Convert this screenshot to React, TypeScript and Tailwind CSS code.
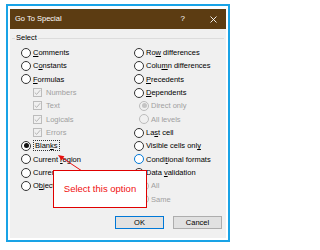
import React from "react";

type Item = {
  label: React.ReactNode;
  kind: "radio" | "check" | "sub";
  disabled?: boolean;
  checked?: boolean;
  focus?: boolean;
  hot?: boolean;
};

const u = (s: string) => <span className="underline underline-offset-1">{s}</span>;

const leftItems: Item[] = [
  { label: <>{u("C")}omments</>, kind: "radio" },
  { label: <>C{u("o")}nstants</>, kind: "radio" },
  { label: <>{u("F")}ormulas</>, kind: "radio" },
  { label: "Numbers", kind: "check", disabled: true },
  { label: "Text", kind: "check", disabled: true },
  { label: "Logicals", kind: "check", disabled: true },
  { label: "Errors", kind: "check", disabled: true },
  { label: <>Blan{u("k")}s</>, kind: "radio", checked: true, focus: true },
  { label: <>Current {u("r")}egion</>, kind: "radio" },
  { label: <>Current {u("a")}rray</>, kind: "radio" },
  { label: <>O{u("b")}jects</>, kind: "radio" },
];

const rightItems: Item[] = [
  { label: <>Ro{u("w")} differences</>, kind: "radio" },
  { label: <>Colu{u("m")}n differences</>, kind: "radio" },
  { label: <>{u("P")}recedents</>, kind: "radio" },
  { label: <>{u("D")}ependents</>, kind: "radio" },
  { label: "Direct only", kind: "sub", disabled: true, checked: true },
  { label: "All levels", kind: "sub", disabled: true },
  { label: <>La{u("s")}t cell</>, kind: "radio" },
  { label: <>Visible cells onl{u("y")}</>, kind: "radio" },
  { label: <>Condi{u("t")}ional formats</>, kind: "radio", hot: true },
  { label: <>Data {u("v")}alidation</>, kind: "radio" },
  { label: "All", kind: "sub", disabled: true },
  { label: "Same", kind: "sub", disabled: true },
];

const Radio = ({ item }: { item: Item }) => {
  const border = item.disabled
    ? "border-[#bcbcbc] bg-[#f0f0f0]"
    : item.hot
    ? "border-[#0078d7] bg-white"
    : "border-[#333333] bg-white";
  const dot = item.disabled ? "bg-[#c4c4c4]" : "bg-[#111111]";
  return (
    <span className={`flex h-[10px] w-[10px] shrink-0 items-center justify-center rounded-full border ${border}`}>
      {item.checked && <span className={`h-[5px] w-[5px] rounded-full ${dot}`} />}
    </span>
  );
};

const Check = () => (
  <span className="flex h-[9px] w-[9px] shrink-0 items-center justify-center border border-[#bcbcbc] bg-[#f0f0f0]">
    <svg width="7" height="7" viewBox="0 0 7 7">
      <path d="M0.8 3.6 L2.7 5.4 L6.2 1.2" fill="none" stroke="#b0b0b0" strokeWidth="0.9" />
    </svg>
  </span>
);

const Row = ({ item }: { item: Item }) => {
  const text = item.disabled ? "text-[#a0a0a0]" : "text-black";
  const pad = item.kind === "check" ? "pl-[12px]" : item.kind === "sub" ? "pl-[5px]" : "";
  return (
    <div className={`flex h-[13.33px] items-center ${pad}`}>
      {item.kind === "check" ? <Check /> : <Radio item={item} />}
      <span
        className={`${item.kind === "check" ? "ml-[4px]" : "ml-[2px]"} ${text} whitespace-nowrap leading-[9px] ${
          item.focus ? "border border-dotted border-[#333] px-[1px]" : ""
        }`}
      >
        {item.label}
      </span>
    </div>
  );
};

export default function App() {
  return (
    <div
      className="relative h-[250px] w-[238px] overflow-hidden bg-white text-[7.5px]"
      style={{ fontFamily: '"Liberation Sans", Arial, sans-serif' }}
    >
      <div className="pl-[6px] pt-[4px]">
        <div className="h-[238px] w-[224px] border-2 border-[#19a3e6] bg-white pb-[2px] pl-[2px] pr-[2px] pt-[3px]">
          <div className="flex h-[229px] w-[216px] flex-col">
            <div className="flex h-[20px] items-center bg-[#5c3c12] pl-[5px] text-white">
              <span className="text-[7.5px]">Go To Special</span>
              <span className="ml-auto mr-[25px] text-[8px]">?</span>
              <svg width="7" height="7" viewBox="0 0 7 7" className="mr-[9px]">
                <path d="M0.5 0.5 L6.5 6.5 M6.5 0.5 L0.5 6.5" stroke="#ffffff" strokeWidth="0.9" />
              </svg>
            </div>
            <div className="flex flex-1 flex-col bg-[#f0f0f0]">
              <fieldset className="mx-[2px] mt-[4px] border-0 border-t border-[#dcdcdc]">
                <legend className="ml-[3px] px-[1px] leading-[10px] text-black">Select</legend>
                <div className="flex pb-[2px] pl-[9px] pt-[3px]">
                  <div className="flex w-[113px] flex-col">
                    {leftItems.map((it, i) => (
                      <Row key={i} item={it} />
                    ))}
                  </div>
                  <div className="flex flex-col">
                    {rightItems.map((it, i) => (
                      <Row key={i} item={it} />
                    ))}
                  </div>
                </div>
              </fieldset>
              <div className="mt-[8px] flex justify-end gap-[9px] pr-[4px]">
                <button className="h-[13px] w-[49px] border border-[#0078d7] bg-[#e1e1e1] leading-none text-black">
                  OK
                </button>
                <button className="h-[13px] w-[49px] border border-[#adadad] bg-[#e1e1e1] leading-none text-black">
                  Cancel
                </button>
              </div>
            </div>
          </div>
        </div>
      </div>

      <svg className="pointer-events-none absolute left-0 top-0" width="238" height="250">
        <line x1="82" y1="171" x2="62" y2="157.7" stroke="#e81010" strokeWidth="1" />
        <polygon points="58,155 64.4,156.2 61.6,160.4" fill="#e81010" />
      </svg>

      <div className="absolute left-[53px] top-[170px] flex h-[38px] w-[94px] items-center justify-center border border-[#e00000] bg-white text-[9.5px] text-[#f01010]">
        Select this option
      </div>
    </div>
  );
}
